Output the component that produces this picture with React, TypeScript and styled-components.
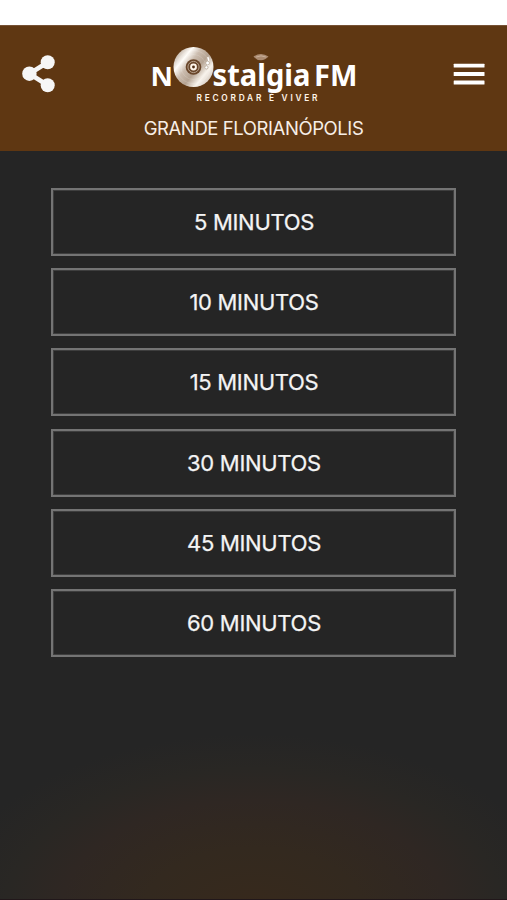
import React from "react";
import styled, { createGlobalStyle } from "styled-components";

const GlobalStyle = createGlobalStyle`
  *, *::before, *::after { box-sizing: border-box; }
  body { margin: 0; background: #252525; }
  button { font: inherit; color: inherit; background: none; border: 0; padding: 0; }
`;

const Screen = styled.div`
  display: flex;
  flex-direction: column;
  height: 900px;
  overflow: hidden;
  font-family: Inter, "Liberation Sans", sans-serif;
  background: radial-gradient(ellipse 310px 175px at 50% 101%, #37291c 0%, #33291f 35%, #2f2723 62%, #292724 80%, #252525 100%) #252525;
`;

const StatusBar = styled.div`
  height: 25px;
  flex: none;
  background: #fff;
`;

const Header = styled.header`
  flex: none;
  height: 126px;
  background: #5f3712;
  border-top: 1px solid #765235;
`;

const Toolbar = styled.div`
  display: flex;
  justify-content: space-between;
  height: 85px;
  padding: 9px 21px 0 22px;
`;

const IconButton = styled.button<{ $top: number }>`
  display: block;
  align-self: flex-start;
  margin-top: ${(p) => p.$top}px;
  svg { display: block; }
`;

const LogoArt = styled.svg`
  display: block;
  flex: none;
  width: 230px;
  height: 75px;
  margin-left: 2px;
`;

const Station = styled.div`
  text-align: center;
  font-size: 18.5px;
  line-height: 34px;
  letter-spacing: -0.42px;
  color: #f7eee6;
`;

const TimerList = styled.main`
  display: flex;
  flex-direction: column;
  gap: 12.2px;
  padding: 37px 51px 0;
`;

const TimerButton = styled.button`
  && {
    height: 68px;
    border: 2.5px solid #747474;
    outline: 1px solid rgba(110, 110, 110, 0.35);
    outline-offset: -3px;
    color: #f4f4f4;
    font-size: 22px;
    -webkit-text-stroke: 0.25px #f4f4f4;
    letter-spacing: -0.3px;
    line-height: 1;
    padding-left: 1px;
  }
`;

const BottomEdge = styled.div`
  height: 1px;
  margin-top: auto;
  background: #21171a;
`;

const ShareIcon = () => (
  <svg width="33" height="38" viewBox="0 0 33 38" fill="#f6f6f6">
    <path d="M25.7 7.3 7.4 18.7 25.7 30.2" fill="none" stroke="#f6f6f6" strokeWidth="4.6" />
    <circle cx="25.7" cy="7.3" r="7" />
    <circle cx="7.4" cy="18.7" r="7.2" />
    <circle cx="25.7" cy="30.2" r="7" />
  </svg>
);

const MenuIcon = () => (
  <svg width="33" height="23" viewBox="0 0 33 23" fill="#fff">
    <rect x="0.7" y="0.7" width="30.8" height="3.9" rx="0.5" />
    <rect x="0.7" y="9.1" width="30.8" height="3.9" rx="0.5" />
    <rect x="0.7" y="17.5" width="30.8" height="3.9" rx="0.5" />
  </svg>
);

const Logo = () => (
  <LogoArt viewBox="0 0 230 75" role="img" aria-label="Nostalgia FM">
    <defs>
      <linearGradient id="disc" x1="0" y1="0.1" x2="1" y2="0.9">
        <stop offset="0.05" stopColor="#b5a494" />
        <stop offset="0.25" stopColor="#fffdf9" />
        <stop offset="0.4" stopColor="#cbbcae" />
        <stop offset="0.58" stopColor="#b5a392" />
        <stop offset="0.76" stopColor="#f8f3ec" />
        <stop offset="1" stopColor="#c4b6aa" />
      </linearGradient>
    </defs>
    <g fill="#fff" fontFamily='"Noto Sans", sans-serif' fontWeight="700">
      <text x="10.5" y="50.5" fontSize="27.5" textLength="22.5" lengthAdjust="spacingAndGlyphs">N</text>
      <text x="72.5" y="50.5" fontSize="31" textLength="98" lengthAdjust="spacingAndGlyphs">stalgia</text>
      <text x="174" y="50.5" fontSize="28.5" textLength="43.5" lengthAdjust="spacingAndGlyphs">FM</text>
    </g>
    <circle cx="53.5" cy="32" r="20" fill="url(#disc)" />
    <g fill="none" stroke="#fff" strokeOpacity="0.2" strokeWidth="0.7">
      <circle cx="53.5" cy="32" r="16.5" />
      <circle cx="53.5" cy="32" r="12.5" />
    </g>
    <circle cx="53.5" cy="32" r="7.8" fill="#69462a" />
    <circle cx="53.5" cy="32" r="5.6" fill="none" stroke="#bda995" strokeWidth="0.9" />
    <circle cx="53.5" cy="32" r="3.4" fill="#fff6eb" />
    <circle cx="53.5" cy="32" r="1.4" fill="#4d2c12" />
    <path d="M67.8 22q2.2 5-.8 10.5" fill="none" stroke="#fff" strokeWidth="1.4" />
    <circle cx="67.6" cy="28" r="1.9" fill="#fff" stroke="#a6937f" strokeWidth="0.6" />
    <circle cx="66.4" cy="32.4" r="1.6" fill="#fff" stroke="#a6937f" strokeWidth="0.6" />
    <path d="M113.5 21.6q7.5-5 15 0-3.2 3.7-7.5 3.7t-7.5-3.7Z" fill="#aa8a70" />
    <path d="M116.2 22q4.8-2.3 9.6 0" fill="none" stroke="#d0b9a4" strokeWidth="0.8" />
    <text x="56.5" y="65.7" fill="#fff5e9" fontFamily="Inter, sans-serif" fontSize="8.3" fontWeight="600" textLength="121">
      RECORDAR É VIVER
    </text>
  </LogoArt>
);

const minutes = [5, 10, 15, 30, 45, 60];

export default function App() {
  return (
    <>
      <GlobalStyle />
      <Screen>
        <StatusBar />
        <Header>
          <Toolbar>
            <IconButton $top={20} aria-label="Compartilhar">
              <ShareIcon />
            </IconButton>
            <Logo />
            <IconButton $top={28} aria-label="Menu">
              <MenuIcon />
            </IconButton>
          </Toolbar>
          <Station>GRANDE FLORIANÓPOLIS</Station>
        </Header>
        <TimerList>
          {minutes.map((value) => (
            <TimerButton key={value}>{value} MINUTOS</TimerButton>
          ))}
        </TimerList>
        <BottomEdge />
      </Screen>
    </>
  );
}
